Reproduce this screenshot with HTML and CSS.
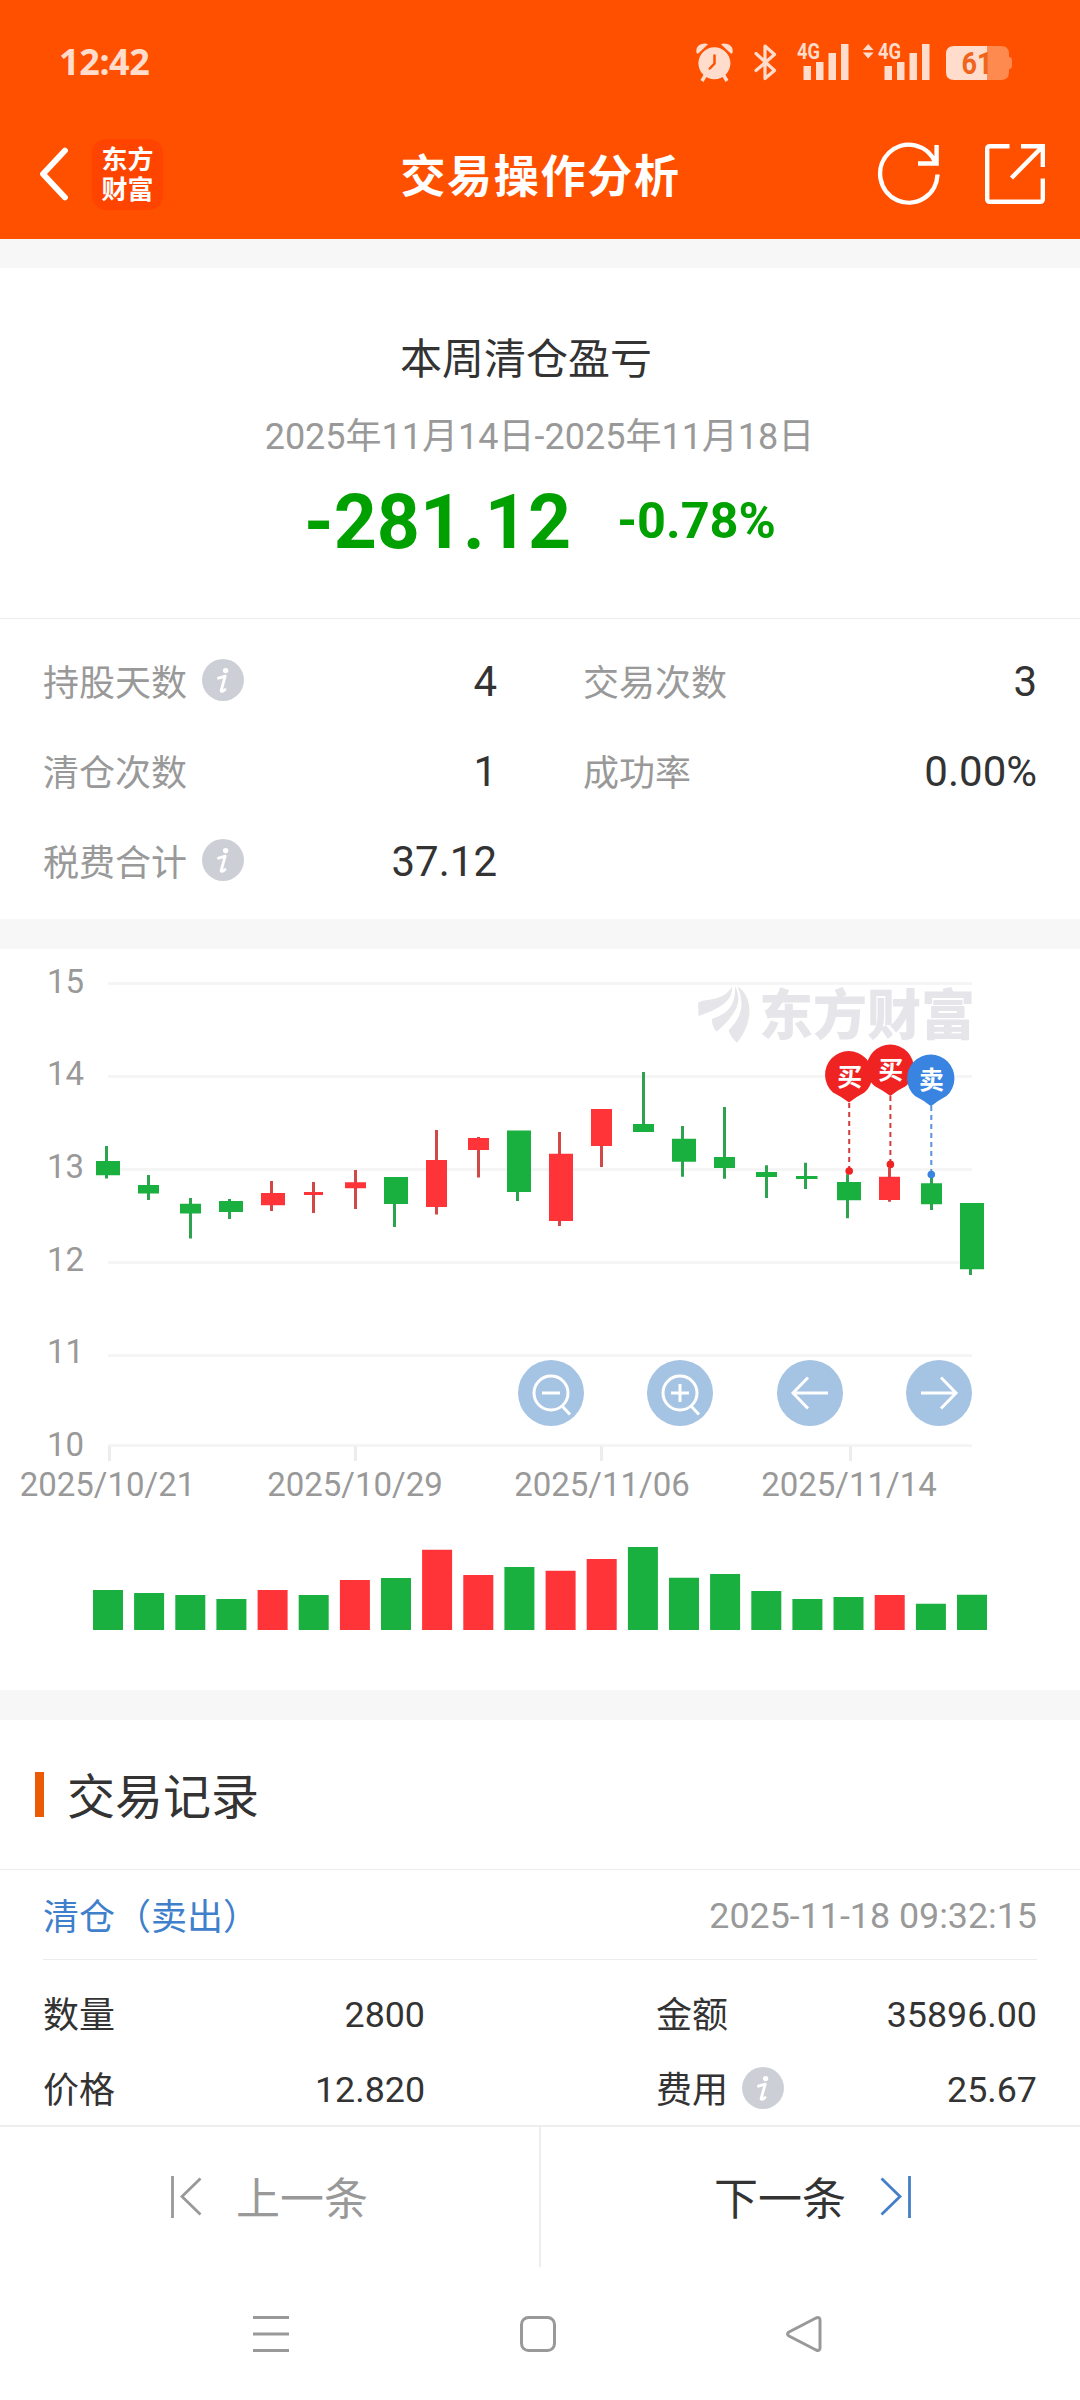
FILE: index.html
```html
<!DOCTYPE html>
<html lang="zh-CN">
<head>
<meta charset="utf-8">
<title>交易操作分析</title>
<link rel="stylesheet" href="styles.css">
</head>
<body>
<svg class="defs" aria-hidden="true">
  <symbol id="info" viewBox="0 0 42 42">
    <circle cx="21" cy="21" r="21" fill="#ccd0d6"/>
    <circle cx="23.600" cy="11.600" r="2.700" fill="#fff"/>
    <path d="M16.400 19.200q4-1.200 6.800-2l-4 14.200q-.5 2.400 3.800-.8" fill="none" stroke="#fff" stroke-width="2.800" stroke-linecap="round" stroke-linejoin="round"/>
  </symbol>
</svg>
<header class="header">
  <div class="status">
    <span class="clock">12:42</span>
    <svg class="status-icons" width="320" height="44" viewBox="694 40 320 44">
      <g fill="#ffdccc">
        <circle cx="714.400" cy="63.300" r="16"/>
        <path d="M696.500 53q-1.500-9 9-9.500l2.500.7-10 9.500zM732.500 53q1.500-9-9-9.500l-2.500.7 10 9.500z"/>
        <path d="M702 81l3.500-6M727 81l-3.500-6" stroke="#ffdccc" stroke-width="3.500"/>
        <path d="M714.500 55.500v8l-4.700 5" fill="none" stroke="#ff5000" stroke-width="2.500" stroke-linecap="round"/>
        <path d="M756 53.500l18.500 17-9.500 8V46l9.500 8.500-18.500 16" fill="none" stroke="#ffdccc" stroke-width="3.200" stroke-linejoin="round" stroke-linecap="round"/>
        <text class="net" x="797" y="59.300" textLength="23" lengthAdjust="spacingAndGlyphs">4G</text>
        <path d="M803.500 66h7.500v14h-7.500zM816 62h7.500v18H816zM828.500 53h7.500v27h-7.500zM841 44h7.500v36H841z"/>
        <path d="M862.800 50l5.400-6 5.400 6zM862.800 52.500h10.800l-5.400 6z"/>
        <text class="net" x="878" y="59.300" textLength="23" lengthAdjust="spacingAndGlyphs">4G</text>
        <path d="M884.500 66h7.500v14h-7.500zM897 62h7.500v18H897zM909.500 53h7.500v27h-7.500zM922 44h7.500v36H922z"/>
        <path d="M954 46h33v34h-33q-8 0-8-8V54q0-8 8-8z"/>
      </g>
      <path d="M987 46h14q8 0 8 8v3q3 0 3 3v6q0 3-3 3v3q0 8-8 8h-14z" fill="#ff8a50"/>
      <text class="battery" x="961.500" y="74" textLength="31" lengthAdjust="spacingAndGlyphs">61</text>
    </svg>
  </div>
  <div class="titlebar">
    <div class="nav-left">
      <svg width="32" height="56" viewBox="0 0 32 56"><path d="M28 4.500L6 28l22 23.500" fill="none" stroke="#fff" stroke-width="5.800" stroke-linecap="round" stroke-linejoin="round"/></svg>
      <div class="logo">东方<br>财富</div>
    </div>
    <h1 class="title">交易操作分析</h1>
    <div class="nav-right">
      <svg width="64" height="64" viewBox="877 141 64 64" fill="none" stroke="#fff" stroke-width="4.400">
        <path d="M937.500 173.500a28.700 29 0 1 1-2-11.500M936.600 144v18.500H918"/>
      </svg>
      <svg width="62" height="62" viewBox="984 142 62 62" fill="none" stroke="#fff" stroke-width="4.400">
        <path d="M1009.500 145.200H990q-2.800 0-2.800 2.800v50q0 2.800 2.800 2.800h50q2.800 0 2.800-2.800v-20.500M1021 145.200h21.800V166M1042.800 145.200L1011.500 177"/>
      </svg>
    </div>
  </div>
</header>

<section class="summary">
  <h2 class="summary-title">本周清仓盈亏</h2>
  <p class="period">2025年11月14日-2025年11月18日</p>
  <p class="profit"><span class="amount">-281.12</span><span class="rate">-0.78%</span></p>
</section>
<section class="stats">
  <div class="stat"><span class="label">持股天数</span><svg class="info"><use href="#info"/></svg><span class="num">4</span></div>
  <div class="stat"><span class="label">交易次数</span><span class="num">3</span></div>
  <div class="stat"><span class="label">清仓次数</span><span class="num">1</span></div>
  <div class="stat"><span class="label">成功率</span><span class="num">0.00%</span></div>
  <div class="stat"><span class="label">税费合计</span><svg class="info"><use href="#info"/></svg><span class="num">37.12</span></div>
</section>

<section class="chart card">
  <svg width="1080" height="741" viewBox="0 949 1080 741">
    <g class="grid">
      <path d="M108 983.500H972M108 1076.500H972M108 1169.500H972M108 1262.500H972M108 1355.500H972M108 1445.500H972"/>
      <path class="tick" d="M109.500 1446v15M355.500 1446v15M601.500 1446v15M850.500 1446v15"/>
    </g>
    <g class="axis" text-anchor="end">
      <text x="84" y="992.500">15</text><text x="84" y="1085">14</text><text x="84" y="1178">13</text>
      <text x="84" y="1271">12</text><text x="84" y="1363">11</text><text x="84" y="1456">10</text>
    </g>
    <g class="axis" text-anchor="middle">
      <text x="107.500" y="1496">2025/10/21</text><text x="355" y="1496">2025/10/29</text>
      <text x="602" y="1496">2025/11/06</text><text x="849" y="1496">2025/11/14</text>
    </g>
    <g fill="#e6e6ea">
      <path d="M698 1003Q700 1001 704 1000.500C718 999 728 995 732 986.500C733 1000 722 1008 698.500 1016Z"/>
      <path d="M735 986C742 1000 739 1012 716.500 1031.700Q711.500 1026 712 1019C730 1013 736 1003 735 986Z"/>
      <path d="M737.500 986.500C753 996 754 1022 737 1042.700Q729.500 1036 728.700 1030C745 1014 743 1000 737.500 986.500Z"/>
      <text class="watermark" x="759" y="1035" textLength="216" lengthAdjust="spacingAndGlyphs">东方财富</text>
    </g>
    <g class="down">
      <path class="wick" d="M106.500 1146V1178.600M148.500 1175V1200M190.500 1198V1238.600M229.500 1199V1219M394.500 1177V1227M517.500 1131V1201M643.500 1072V1132M682.500 1126V1176.700M724.500 1107V1178.700M766.500 1165.300V1198M805.500 1162.700V1189M847.500 1174.300V1218.300M931.500 1178V1210M970.500 1203V1275"/>
      <path d="M96 1161h24v14.300H96zM138 1185h21v8.400h-21zM180 1203.800h21v9.600h-21zM219 1201h24v11h-24zM384 1177h24v27h-24zM507 1130.500h24v61.500h-24zM633 1124h21v8h-21zM672 1138.700h24v23h-24zM714 1157h21v11h-21zM756 1172h21v5h-21zM796 1176h21.500v3H796zM837 1182h24v18.300h-24zM921 1183.300h21v21h-21zM960 1203h24v66.300h-24z"/>
    </g>
    <g class="up">
      <path class="wick" d="M271.500 1181V1211M313.500 1182V1213M355.500 1170V1209M436.500 1130V1214.500M478.500 1137V1177.500M559.500 1132V1226M601.500 1109V1167M889.500 1168V1201.700"/>
      <path d="M261 1193h24v12.300h-24zM304 1192h19v3h-19zM345 1182.300h21v5.900h-21zM426 1160h21v47h-21zM468 1138h21v12h-21zM549 1153.700h24v67.300h-24zM591 1109h21v37h-21zM879 1176.700h21v23.300h-21z"/>
    </g>
    <g class="pin buy">
      <path class="lead" d="M849.200 1103V1170"/><circle cx="849.200" cy="1171" r="3.800"/>
      <path d="M849 1102.500Q842 1097 833 1092.500A23.700 23.700 0 1 1 864.500 1092.500Q856 1097 849 1102.500Z"/>
      <text x="849.700" y="1085.500">买</text>
    </g>
    <g class="pin buy">
      <path class="lead" d="M890.400 1096V1163"/><circle cx="890.400" cy="1164.400" r="3.800"/>
      <path d="M890.400 1096Q883 1090.500 874.500 1086A23.700 23.700 0 1 1 906 1086Q897 1090.500 890.400 1096Z"/>
      <text x="890.800" y="1078.500">买</text>
    </g>
    <g class="pin sell">
      <path class="lead" d="M931.300 1106V1173"/><circle cx="931.300" cy="1174.600" r="3.800"/>
      <path d="M931 1106.200Q924 1100.500 915 1096A23.700 23.700 0 1 1 946.500 1096Q938 1100.500 931 1106.200Z"/>
      <text x="931.500" y="1088.500">卖</text>
    </g>
    <g class="control">
      <circle class="disc" cx="551" cy="1393" r="33"/><circle class="disc" cx="680" cy="1393" r="33"/>
      <circle class="disc" cx="810" cy="1393" r="33"/><circle class="disc" cx="939" cy="1393" r="33"/>
      <circle cx="551" cy="1393" r="17"/><path d="M542 1393h18M562 1406l8 8.500"/>
      <circle cx="680" cy="1393" r="17"/><path d="M671 1393h18M680 1384v18M691 1406l8 8.500"/>
      <path d="M828 1393H793M808 1377.500L793 1393l15 15.500"/>
      <path d="M921 1393h35M941 1377.500l15 15.500-15 15.500"/>
    </g>
    <g class="down">
      <path d="M93 1590h30v40H93zM134.100 1593h30v37h-30zM175.300 1595h30v35h-30zM216.400 1599h30v31h-30zM298.700 1595h30v35h-30zM381 1578h30v52h-30zM504.400 1567h30v63h-30zM627.900 1547h30v83h-30zM669 1577.700h30v52.300h-30zM710.100 1574h30v56h-30zM751.300 1591h30v39h-30zM792.400 1599h30v31h-30zM833.500 1597h30v33h-30zM915.900 1603.700h30v26.300h-30zM957 1594.700h30v35.300h-30z"/>
    </g>
    <g class="up">
      <path d="M257.600 1590h30v40h-30zM339.900 1580h30v50h-30zM422.100 1549.700h30v80.300h-30zM463.300 1575h30v55h-30zM545.600 1570.700h30v59.300h-30zM586.700 1559h30v71h-30zM874.700 1595h30v35h-30z"/>
    </g>
  </svg>
</section>

<section class="records card">
  <h2 class="records-title"><span>交易记录</span></h2>
  <article class="record">
    <div class="record-head"><span class="kind">清仓（卖出）</span><time class="time">2025-11-18 09:32:15</time></div>
    <dl class="fields">
      <div class="field"><dt>数量</dt><dd>2800</dd></div>
      <div class="field"><dt>金额</dt><dd>35896.00</dd></div>
      <div class="field"><dt>价格</dt><dd>12.820</dd></div>
      <div class="field"><dt>费用</dt><svg class="info"><use href="#info"/></svg><dd>25.67</dd></div>
    </dl>
  </article>
</section>

<footer class="pager">
  <div class="page prev">
    <svg width="32" height="44" viewBox="0 0 32 44"><path d="M2.500 1v42M30.500 3.500L12 21.500l18.500 18"/></svg>
    <span>上一条</span>
  </div>
  <div class="page next">
    <span>下一条</span>
    <svg width="32" height="44" viewBox="0 0 32 44"><path d="M29.500 1v42M1.500 3.500L20 21.500l-18.500 18"/></svg>
  </div>
</footer>
<nav class="system-nav">
  <svg width="36" height="38" viewBox="0 0 36 38"><path d="M0 2.500h36M0 19h36M0 35.500h36"/></svg>
  <svg width="38" height="38" viewBox="0 0 38 38"><rect x="2.500" y="2.500" width="33" height="33" rx="7"/></svg>
  <svg width="38" height="38" viewBox="0 0 38 38"><path d="M31 3L4 17q-3 2 0 4L31 35q4 1.500 4-2V5q0-3.500-4-2z"/></svg>
</nav>
</body>
</html>
```

FILE: styles.css
```css
* { box-sizing: border-box; margin: 0; padding: 0; }
body {
  width: 1080px;
  height: 2400px;
  overflow: hidden;
  display: flex;
  flex-direction: column;
  background: #fff;
  color: #333;
  font-family: Roboto, "Noto Sans CJK SC", sans-serif;
}
svg { display: block; flex: none; }
h1, h2 { font-weight: 400; }
.defs { position: absolute; width: 0; height: 0; }

.header { height: 239px; background: #ff5000; color: #fff; }
.status {
  height: 124px;
  padding: 40px 66px 0 59px;
  display: flex;
  justify-content: space-between;
}
.clock {
  font: 700 36px/44px "Noto Sans", sans-serif;
  letter-spacing: -0.4px;
  color: #ffdccc;
}
.net { font: 700 22px Roboto, sans-serif; }
.battery { font: 700 31px Roboto, sans-serif; fill: #f0641e; }
.titlebar {
  height: 100px;
  padding: 0 34px 0 37px;
  display: grid;
  grid-template-columns: 1fr auto 1fr;
  align-items: center;
}
.nav-left, .nav-right { display: flex; align-items: center; }
.nav-left { gap: 23px; }
.nav-right { justify-content: flex-end; gap: 43px; }
.logo {
  width: 71px;
  height: 71px;
  padding-top: 6px;
  border-radius: 14px;
  background: #ff4400;
  text-align: center;
  font: 700 26px/30px "Liberation Sans", "Noto Sans CJK SC", sans-serif;
}
.title {
  margin-right: 2px;
  font: 700 45px/60px "Noto Sans CJK SC", sans-serif;
  letter-spacing: 1.7px;
}

.card { border-top: 30px solid #f7f7f7; }
.summary { height: 379px; border-top: 29px solid #f7f7f7; text-align: center; }
.summary-title { margin: 62px 28px 0 0; font-size: 42px; line-height: 60px; }
.period { margin: 22px 1px 0 0; font-size: 36px; line-height: 50px; color: #999; }
.profit {
  margin-top: 15px;
  padding-left: 304px;
  display: flex;
  align-items: center;
  gap: 46px;
  line-height: 90px;
  font-weight: 700;
  color: #00a000;
}
.amount { font-size: 75.2px; }
.rate { margin-top: -2px; font-size: 50.5px; }

.stats {
  height: 301px;
  border-top: 1px solid #ececec;
  padding: 16px 43px 0;
  display: grid;
  grid-template-columns: 454px 454px;
  column-gap: 86px;
  grid-auto-rows: 90px;
}
.stat, .field { display: flex; align-items: center; }
.label { font-size: 36px; color: #999; }
.info { width: 42px; height: 42px; margin-left: 15px; }
.num { margin: 2px 0 0 auto; font-size: 42px; }

.chart { height: 771px; }
.grid path { fill: none; stroke: #f5f5f5; stroke-width: 3; }
.grid .tick { stroke: #ededed; }
.axis { font-size: 33px; fill: #999; }
.watermark { font: 900 54px "Noto Sans CJK SC", sans-serif; }
.down { fill: #1ab03f; }
.up { fill: #ff3439; }
.wick { fill: none; stroke-width: 3; }
.down .wick { stroke: #2fa24f; }
.up .wick { stroke: #d04848; }
.pin text {
  font: 700 25px "Noto Sans CJK SC", sans-serif;
  text-anchor: middle;
  fill: #fff;
}
.pin .lead { stroke-width: 2; stroke-dasharray: 5 4; }
.buy { fill: #f02323; stroke: none; }
.buy .lead { stroke: #d23c3c; }
.sell { fill: #3884e0; }
.sell .lead { stroke: #5a94d8; }
.control { fill: none; stroke: #fff; stroke-width: 3; }
.control .disc { fill: #a5c3e3; stroke: none; }

.records { height: 435px; overflow: hidden; }
.records-title {
  height: 149px;
  padding-left: 35px;
  display: flex;
  align-items: center;
  gap: 23px;
  font-size: 48px;
}
.records-title::before { content: ""; width: 9px; height: 45px; background: #eb5a05; }
.records-title span { margin-top: -4px; }
.record { border-top: 1px solid #ececec; padding: 0 43px; }
.record-head {
  height: 90px;
  border-bottom: 1px solid #ececec;
  display: flex;
  align-items: center;
  justify-content: space-between;
  font-size: 36px;
}
.kind { margin-top: -2px; color: #3f80cc; }
.time { margin-top: 3px; font-size: 35.8px; color: #999; }
.fields {
  padding-top: 17px;
  display: grid;
  grid-template-columns: 382px 381px;
  column-gap: 231px;
  grid-auto-rows: 75px;
  font-size: 36px;
}
.field dt { margin-top: -5px; }
.field .info { margin-top: -3px; margin-left: 14px; }
.field dd { margin-left: auto; font-size: 35.8px; }

.pager {
  height: 142px;
  border-top: 2px solid #eee;
  display: grid;
  grid-template-columns: 541px 539px;
  background: #fff;
}
.page { display: flex; align-items: center; gap: 34px; font-size: 44px; }
.page span { margin-top: -3px; }
.page svg { fill: none; stroke-width: 2.8; }
.prev { padding-left: 170px; color: #999; border-right: 2px solid #eee; }
.prev svg { stroke: #999; }
.next { padding-left: 173px; }
.next svg { stroke: #447fc8; }
.system-nav {
  height: 133px;
  padding-left: 253px;
  display: flex;
  align-items: center;
  gap: 230px;
}
.system-nav svg { fill: none; stroke: #999; stroke-width: 3; }
.system-nav svg:last-child { margin-left: -2px; }
```
